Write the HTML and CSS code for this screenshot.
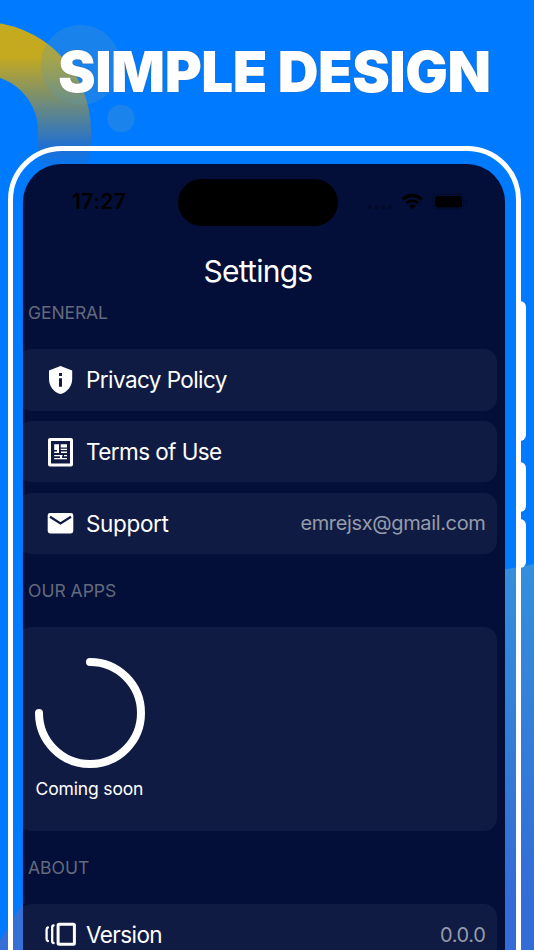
FILE: index.html
```html
<!DOCTYPE html>
<html lang="en">
<head>
<meta charset="utf-8">
<title>Simple Design</title>
<link rel="stylesheet" href="styles.css">
</head>
<body>
<main class="poster">
  <svg class="backdrop" viewBox="0 0 534 950" aria-hidden="true">
    <defs>
      <linearGradient id="ring" gradientUnits="userSpaceOnUse" x1="0" y1="57" x2="0" y2="168">
        <stop offset="0" stop-color="#c5a91f"/>
        <stop offset="0.82" stop-color="#1d6fd3"/>
        <stop offset="1" stop-color="#0778f2"/>
      </linearGradient>
      <linearGradient id="wave" gradientUnits="userSpaceOnUse" x1="0" y1="564" x2="0" y2="900">
        <stop offset="0" stop-color="#348fdc"/>
        <stop offset="1" stop-color="#336cd6"/>
      </linearGradient>
    </defs>
    <path fill="url(#ring)" d="M-18 22A109 109 0 0 1 91 131Q91.500 150 87 166H42Q36.500 152 38 131A56 56 0 0 0 -18 75Z"/>
    <circle cx="80.500" cy="65" r="40" fill="#5e9bb5" fill-opacity=".27"/>
    <circle cx="121" cy="118.500" r="13.700" fill="#1a83ec"/>
    <path fill="url(#wave)" d="M480 574Q508 569 534 564V950H480Z"/>
    <path fill="#366fd5" d="M0 940L24 901V950H0Z"/>
  </svg>
  <h1 class="headline">SIMPLE DESIGN</h1>
  <div class="phone">
    <i class="key key-power"></i><i class="key key-up"></i><i class="key key-down"></i>
    <section class="screen">
      <div class="status">
        <span class="clock">17:27</span>
        <span class="island"></span>
        <svg class="signals" width="102" height="20" viewBox="366 192 102 20" aria-hidden="true">
          <g fill="#030a29"><circle cx="369.700" cy="207.500" r="2"/><circle cx="376.400" cy="207.500" r="2"/><circle cx="383.200" cy="207.500" r="2"/><circle cx="390" cy="207.500" r="2"/></g>
          <g fill="none" stroke="#000" stroke-width="3"><path d="M402.700 199.300Q412.300 191.500 421.900 199.300"/><path d="M406.300 203.200Q412.300 198.200 418.300 203.200"/></g>
          <path d="M412.300 209.200L408.900 205.800Q412.300 203.300 415.700 205.800Z"/>
          <rect x="433" y="194.500" width="30.500" height="14.500" rx="4.500" fill="none" stroke="#030a26"/>
          <rect x="435" y="196" width="27" height="11.500" rx="3"/>
          <path d="M465.500 199.500Q468 201.700 465.500 204Z" fill="#020822"/>
        </svg>
      </div>
      <h2 class="title"><span>Settings</span></h2>
      <h3 class="label label-general"><span>GENERAL</span></h3>
      <div class="list">
        <div class="card row">
          <svg class="icon" width="32" height="32" viewBox="0 0 32 32" aria-hidden="true"><path fill="#fff" fill-rule="evenodd" d="M16.500 2L28.200 6.500V15C28.200 22 23.500 28.300 16.500 30C9.500 28.300 5 22 5 15V6.500ZM15 9V12H18V9ZM15 14.300V22.700H18V14.300Z"/></svg>
          <span class="name privacy">Privacy Policy</span>
        </div>
        <div class="card row">
          <svg class="icon" width="32" height="32" viewBox="0 0 32 32" aria-hidden="true"><rect x="5.500" y="3.500" width="22" height="25.500" rx=".5" fill="none" stroke="#fff" stroke-width="3"/><path fill="#fff" d="M10.200 8.300H15V14H10.200ZM16.700 8.300H23V11.500H16.700ZM16.700 12.700H23V14.100H16.700ZM10.200 15.500H14V17H10.200ZM17 15.500H23V17H17ZM10.200 18.900H18.500V20.300H10.200ZM20 18.900H23V20.300H20ZM10.200 21.900H23V23.300H10.200ZM13 14H15V17H13ZM16 20H18V22H16Z"/></svg>
          <span class="name terms">Terms of Use</span>
        </div>
        <div class="card row">
          <svg class="icon" width="32" height="32" viewBox="0 0 32 32" aria-hidden="true"><rect x="3.700" y="6" width="25.600" height="20.500" rx="2.400" fill="#fff"/><path d="M6 9.800L16.500 16.500L27 9.800" fill="none" stroke="#101b43" stroke-width="2.300"/></svg>
          <span class="name support">Support</span>
          <span class="value email">emrejsx@gmail.com</span>
        </div>
      </div>
      <h3 class="label"><span>OUR APPS</span></h3>
      <div class="card apps">
        <svg width="112" height="112" viewBox="0 0 112 112" aria-hidden="true"><path d="M56 5A51 51 0 1 1 5 56" fill="none" stroke="#fff" stroke-width="8" stroke-linecap="round"/></svg>
        <span class="soon">Coming soon</span>
      </div>
      <h3 class="label"><span>ABOUT</span></h3>
      <div class="card row">
        <svg class="icon" width="32" height="32" viewBox="0 0 32 32" aria-hidden="true"><g fill="none" stroke="#fff" stroke-width="3" stroke-linejoin="round" stroke-linecap="round"><rect x="14.100" y="5.300" width="16.300" height="20" rx="1"/><path d="M9.600 6.500Q8.200 6.500 8.200 8.500V22Q8.200 24 9.600 24M3.900 8.500Q2.600 8.700 2.600 10.500V20Q2.600 21.800 3.900 22" stroke-width="2.300"/></g></svg>
        <span class="name version">Version</span>
        <span class="value number">0.0.0</span>
      </div>
    </section>
  </div>
</main>
</body>
</html>
```

FILE: styles.css
```css
* { box-sizing: border-box; }
body { margin: 0; font-family: Inter, "Liberation Sans", sans-serif; }
h1, h2, h3 { margin: 0; }
.poster { position: relative; width: 534px; height: 950px; overflow: hidden; background: #007bff; }
.backdrop { position: absolute; inset: 0; width: 534px; height: 950px; }
.headline {
  position: relative; height: 146.400px; padding: 37.500px 0 0 58px; white-space: nowrap;
  font-size: 56.500px; line-height: 68px; font-weight: 900; letter-spacing: -.48px;
  color: #fff; text-shadow: 0 0 1px #555;
}
.phone {
  position: relative; width: 512.500px; height: 900px; margin-left: 8px; padding: 12.500px 10.500px 0 10px;
  border: 5px solid #fff; border-top-width: 5.800px; border-radius: 54px 54px 0 0;
}
.key { position: absolute; right: -10.700px; width: 8px; background: #fff; border-radius: 0 6px 6px 0; }
.key-power { top: 149.500px; height: 140px; }
.key-up { top: 310.500px; height: 50px; }
.key-down { top: 367.500px; height: 49.500px; }
.screen { height: 860px; overflow: hidden; background: #030f38; border-radius: 38px 38px 0 0; }
.status { display: flex; height: 76px; padding: 15px 0 0 49px; align-items: flex-start; }
.clock { width: 106px; flex: none; padding-top: 10.500px; font-size: 21px; line-height: 26px; font-weight: 600; letter-spacing: .45px; color: #000; }
.island { width: 160px; height: 47px; flex: none; border-radius: 24px; background: #000; }
.signals { flex: none; margin: 13px 0 0 27.500px; }
.title { height: 62px; padding: 0 0 0 180.500px; font-size: 30px; line-height: 62px; font-weight: 400; letter-spacing: -.75px; color: #fff; white-space: nowrap; }
.label { height: 73.200px; padding: 25px 0 0 5px; font-size: 17.500px; line-height: 24px; font-weight: 400; color: #646a7d; }
.label-general { height: 48px; padding-top: 0; margin-top: -.5px; letter-spacing: -.1px; }
.list { display: grid; gap: 10.400px; }
.card { width: 478.500px; margin-left: -5px; border-radius: 13px; background: #101b43; }
.row { display: flex; align-items: center; height: 61.200px; padding: 0 11px 0 26px; color: #fff; white-space: nowrap; }
.icon { flex: none; margin-right: 10px; }
.name { font-size: 22.500px; line-height: 32px; padding-top: 1px; letter-spacing: -.57px; }
.support { letter-spacing: -.35px; }
.value { margin-left: auto; font-size: 20px; line-height: 30px; letter-spacing: -.35px; color: #959baa; }
.apps { height: 204px; padding: 30.300px 0 0 16px; }
.apps svg { display: block; }
.soon { display: block; padding: 8px 0 0 1.500px; font-size: 17.500px; line-height: 24px; letter-spacing: -.15px; color: #fff; }
```
